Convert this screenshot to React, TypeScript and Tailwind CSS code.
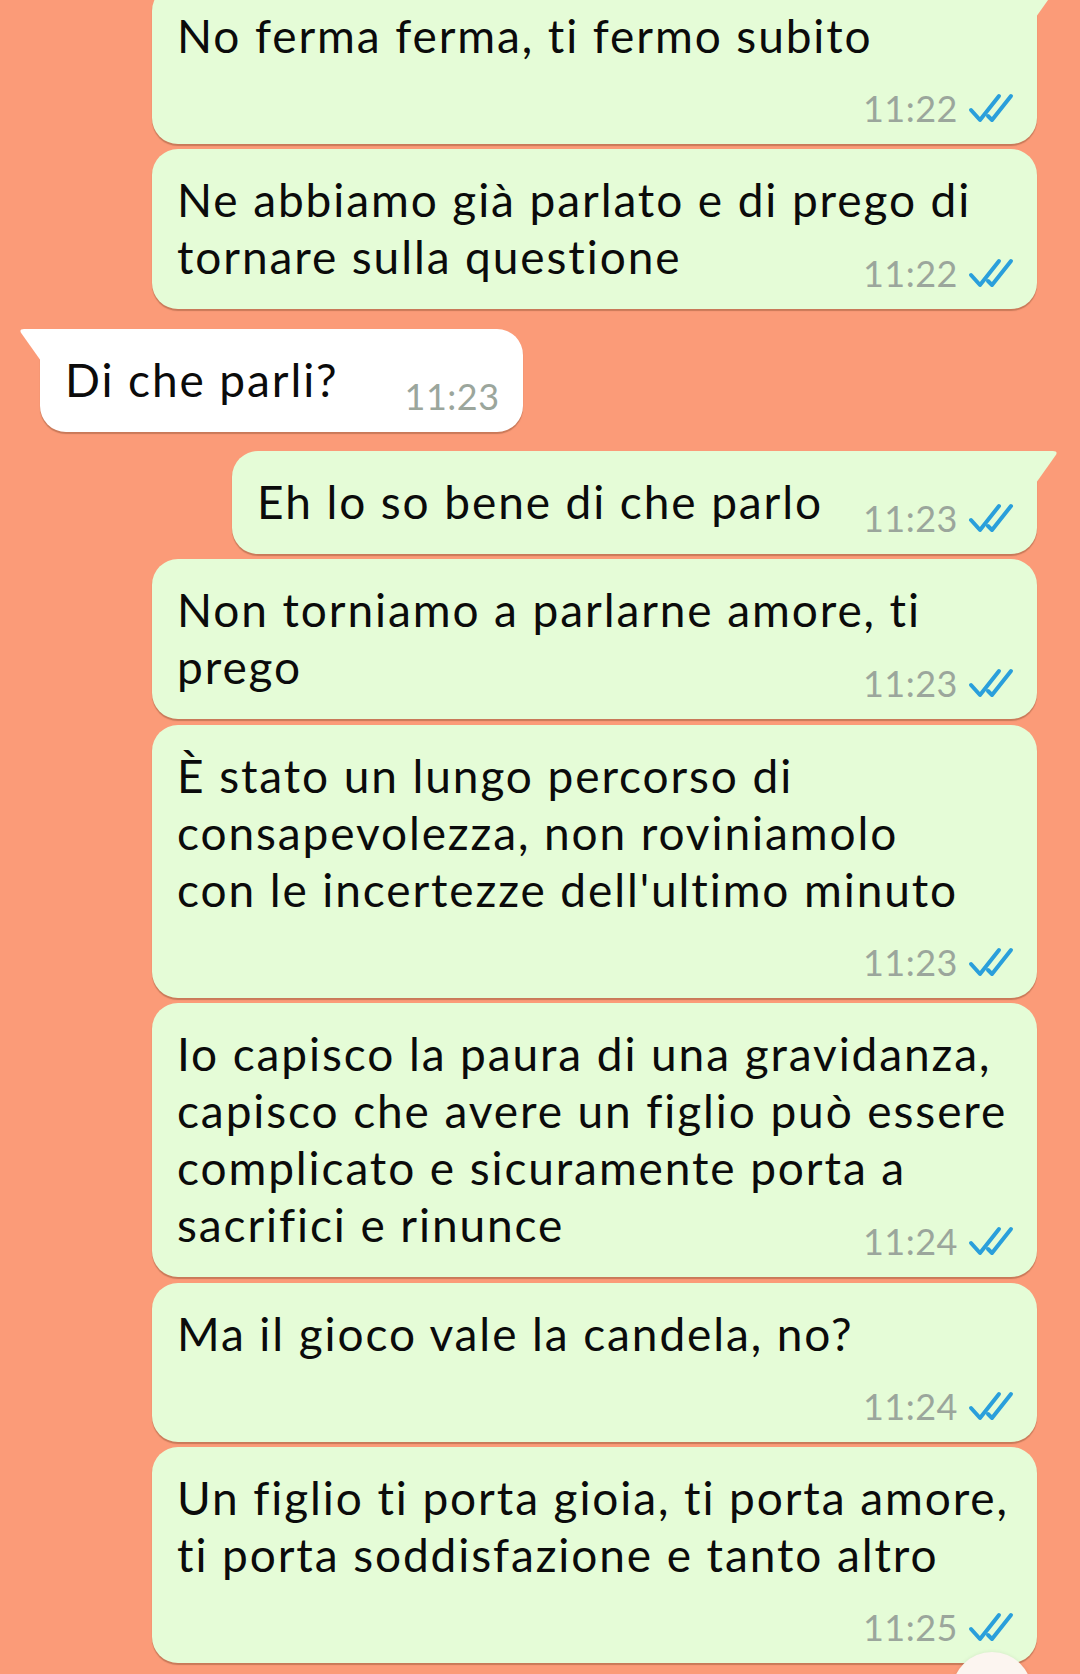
import React from 'react';

type Msg = {
  out: boolean;
  tail?: boolean;
  mt: string;
  mode: 'below' | 'inline' | 'row';
  lines: string[];
  time: string;
};

const msgs: Msg[] = [
  { out: true, tail: true, mt: '-mt-[15px]', mode: 'below', lines: ['No ferma ferma, ti fermo subito'], time: '11:22' },
  { out: true, mt: 'mt-[5px]', mode: 'inline', lines: ['Ne abbiamo già parlato e di prego di', 'tornare sulla questione'], time: '11:22' },
  { out: false, tail: true, mt: 'mt-[20px]', mode: 'row', lines: ['Di che parli?'], time: '11:23' },
  { out: true, tail: true, mt: 'mt-[19px]', mode: 'row', lines: ['Eh lo so bene di che parlo'], time: '11:23' },
  { out: true, mt: 'mt-[5px]', mode: 'inline', lines: ['Non torniamo a parlarne amore, ti', 'prego'], time: '11:23' },
  {
    out: true,
    mt: 'mt-[6px]',
    mode: 'below',
    lines: ['È stato un lungo percorso di', 'consapevolezza, non roviniamolo', "con le incertezze dell'ultimo minuto"],
    time: '11:23',
  },
  {
    out: true,
    mt: 'mt-[5px]',
    mode: 'inline',
    lines: [
      'Io capisco la paura di una gravidanza,',
      'capisco che avere un figlio può essere',
      'complicato e sicuramente porta a',
      'sacrifici e rinunce',
    ],
    time: '11:24',
  },
  { out: true, mt: 'mt-[6px]', mode: 'below', lines: ['Ma il gioco vale la candela, no?'], time: '11:24' },
  {
    out: true,
    mt: 'mt-[5px]',
    mode: 'below',
    lines: ['Un figlio ti porta gioia, ti porta amore,', 'ti porta soddisfazione e tanto altro'],
    time: '11:25',
  },
];

const Ticks = () => (
  <svg width="46" height="30" viewBox="0 0 46 30" fill="none" stroke="#2a9fdb" strokeWidth="4" strokeLinecap="round" strokeLinejoin="round">
    <path d="M3 17L12 27L31 3" />
    <path d="M20 23L24 27L43 3" />
  </svg>
);

const Time = ({ time, out }: { time: string; out: boolean }) => (
  <div className="flex items-center gap-[10px] h-[40px]">
    <span className="text-[36px] leading-[40px] text-[#9ba69c] tracking-[0.5px]">{time}</span>
    {out && <Ticks />}
  </div>
);

const Bubble = ({ m }: { m: Msg }) => {
  const bg = m.out ? 'bg-[#e5fcd7]' : 'bg-white';
  const fill = m.out ? '#e5fcd7' : '#ffffff';
  const corner = m.tail ? (m.out ? 'rounded-tr-none' : 'rounded-tl-none') : '';
  const width = m.out && m.mode !== 'row' ? 'w-[885px]' : '';

  return (
    <div className={`relative ${m.mt} ${bg} ${width} rounded-[26px] ${corner} pt-[22px] pb-[16px] pl-[25px] pr-[23px] shadow-[0_2px_1px_rgba(140,80,50,0.45)]`}>
      {m.tail && m.out && (
        <svg className="absolute top-0 right-[-21px]" width="22" height="32" viewBox="0 0 22 32">
          <path d="M0 0H17Q22.5 0 19.5 4.5L0 32Z" fill={fill} />
        </svg>
      )}
      {m.tail && !m.out && (
        <svg className="absolute top-0 left-[-21px]" width="22" height="32" viewBox="0 0 22 32">
          <path d="M22 0H5Q-0.5 0 2.5 4.5L22 32Z" fill={fill} />
        </svg>
      )}

      {m.mode === 'row' ? (
        <div className="flex items-start">
          <div className="leading-[57px] whitespace-nowrap">{m.lines[0]}</div>
          <div className={`mt-[25px] ${m.out ? 'ml-[40px]' : 'ml-[66px]'}`}>
            <Time time={m.time} out={m.out} />
          </div>
        </div>
      ) : (
        <>
          <div className="leading-[57px]">
            {m.lines.map((l, i) => (
              <div key={i} className="whitespace-nowrap">
                {l}
              </div>
            ))}
          </div>
          <div className={`flex justify-end ${m.mode === 'inline' ? '-mt-[32px]' : 'mt-[24px]'}`}>
            <Time time={m.time} out={m.out} />
          </div>
        </>
      )}
    </div>
  );
};

export default function App() {
  return (
    <div className="relative w-[1080px] h-[1674px] overflow-hidden bg-[#fb9b78] font-['Lato','Noto_Sans',sans-serif] text-[46px] tracking-[1.9px] text-[#0b0b0b]">
      <div className="flex flex-col">
        {msgs.map((m, i) => (
          <div key={i} className={`flex ${m.out ? 'justify-end pr-[43px]' : 'justify-start pl-[40px]'}`}>
            <Bubble m={m} />
          </div>
        ))}
      </div>

      {/* scroll-down button peeking at the bottom */}
      <div className="absolute top-[1652px] left-[952px] w-[80px] h-[80px] rounded-full bg-[#fcf5f0] shadow-[0_0_4px_rgba(0,0,0,0.08)]" />
    </div>
  );
}
